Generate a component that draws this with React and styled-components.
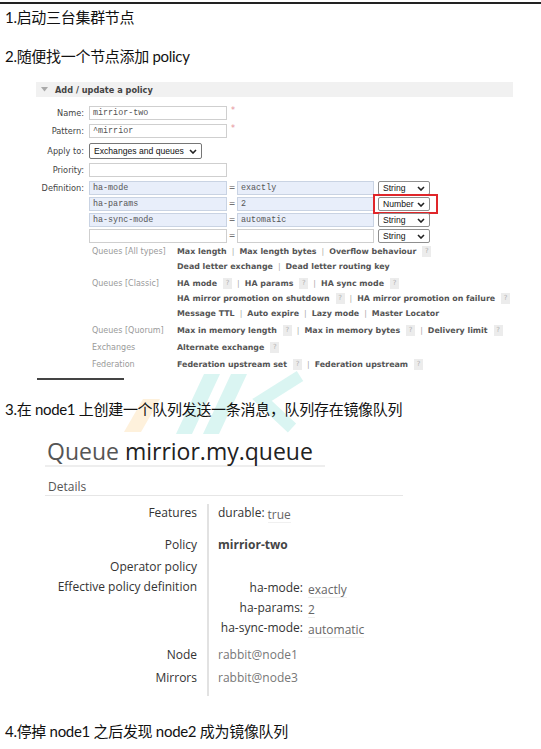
import React from 'react';
import styled, { createGlobalStyle } from 'styled-components';

const Global = createGlobalStyle`
  html, body { margin: 0; padding: 0; background: #fff; }
  body { font-family: "Noto Sans CJK SC", "Noto Sans", sans-serif; }
`;

const Page = styled.div`
  position: relative;
  isolation: isolate;
  width: 541px;
  height: 749px;
  overflow: hidden;
  padding-top: 2px;
  box-sizing: border-box;
`;

const TopRule = styled.div`
  height: 2px;
  background: #222;
`;

const Para = styled.div`
  margin-top: ${p => p.$mt}px;
  padding-left: 5px;
  font-family: Lato, "Noto Sans CJK SC", sans-serif;
  font-size: 15px;
  line-height: 20px;
  letter-spacing: -0.3px;
  color: #111;
  white-space: nowrap;
`;

/* ---------- policy form ---------- */
const PolicyPanel = styled.div`
  margin: 16px 0 0 36px;
  width: 477px;
  font-family: "DejaVu Sans", Verdana, sans-serif;
`;

const PanelHeader = styled.div`
  height: 15px;
  background: #f1f1f1;
  display: flex;
  align-items: center;
  gap: 7px;
  padding-left: 5px;
  font-size: 8.2px;
  font-weight: bold;
  color: #444;
`;

const FormRow = styled.div`
  display: flex;
  align-items: ${p => (p.$top ? 'flex-start' : 'center')};
  margin-top: ${p => p.$mt}px;
`;

const Label = styled.div`
  width: 53px;
  padding-right: 5px;
  box-sizing: border-box;
  text-align: right;
  font-size: 8.2px;
  line-height: 14px;
  color: #444;
  white-space: nowrap;
`;

const TextInput = styled.div`
  width: ${p => p.$w || 138}px;
  height: 14px;
  box-sizing: border-box;
  border: 1px solid ${p => (p.$tint ? '#c9d3e3' : '#cfcfcf')};
  background: ${p => (p.$tint ? '#e8eefa' : '#fff')};
  padding-left: 3px;
  font-family: "Liberation Mono", monospace;
  font-size: 8.4px;
  line-height: 12px;
  color: #555;
  white-space: nowrap;
  overflow: hidden;
`;

const Required = styled.span`
  align-self: flex-start;
  margin-left: 4px;
  font-size: 8px;
  line-height: 9px;
  color: #e58f98;
`;

const SelectBox = styled.div`
  width: ${p => p.$w}px;
  height: ${p => p.$h}px;
  box-sizing: border-box;
  border: 1px solid ${p => p.$border || '#767676'};
  border-radius: 2px;
  background: #fff;
  display: flex;
  align-items: center;
  justify-content: space-between;
  padding: 0 4px 0 4px;
  font-family: "Liberation Sans", Arial, sans-serif;
  font-size: 8.6px;
  color: #111;
  white-space: nowrap;
`;

const DefGrid = styled.div`
  display: grid;
  grid-template-columns: 138px 10px 137px 56px;
  row-gap: 2px;
  align-items: center;
`;

const Eq = styled.div`
  text-align: center;
  font-size: 8px;
  color: #555;
  line-height: 14px;
`;

const SelectWrap = styled.div`
  position: relative;
  justify-self: end;
`;

const Annotation = styled.div`
  position: absolute;
  left: -5px;
  right: -8px;
  top: -3px;
  bottom: -3px;
  border: 2px solid #e0262a;
  pointer-events: none;
`;

const HelpTable = styled.div`
  margin: 1px 0 0 53px;
`;

const HelpGroup = styled.div`
  display: grid;
  grid-template-columns: 88px 1fr;
  margin-bottom: 2px;
  line-height: 15px;
`;

const HelpLabel = styled.div`
  padding-left: 3px;
  font-size: 8px;
  color: #9a9a9a;
  white-space: nowrap;
`;

const HelpLine = styled.div`
  font-size: 7.9px;
  font-weight: bold;
  color: #555;
  white-space: nowrap;
  display: flex;
  align-items: center;
`;

const Sep = styled.span`
  font-weight: normal;
  color: #aaa;
  margin: 0 5px;
`;

const HelpBadge = styled.span`
  display: inline-block;
  width: 9px;
  height: 11px;
  margin-left: 6px;
  background: #ececec;
  color: #b0b0b0;
  font-size: 7px;
  font-weight: normal;
  line-height: 11px;
  text-align: center;
`;

const ShortRule = styled.div`
  margin: 6px 0 0 37px;
  width: 87px;
  height: 2px;
  background: #444;
`;

/* ---------- queue page ---------- */
const QueueSection = styled.div`
  margin-left: 45px;
  font-family: "Open Sans", "Noto Sans", sans-serif;
`;

const QueueTitle = styled.div`
  margin-top: 18px;
  width: 280px;
  padding-left: 2px;
  box-sizing: border-box;
  border-bottom: 2px solid #eeeeee;
  font-size: 23px;
  line-height: 28px;
  color: #555;
  white-space: nowrap;
`;

const QueueName = styled.span`
  color: #222;
`;

const SectionTitle = styled.div`
  margin-top: 12px;
  width: 358px;
  padding-left: 3px;
  box-sizing: border-box;
  border-bottom: 1px solid #e6e6e6;
  font-size: 12px;
  line-height: 16px;
  color: #555;
`;

const DetailsTable = styled.div`
  margin-top: 8px;
  display: grid;
  grid-template-columns: 162px 1fr;
  font-size: 12px;
`;

const DLabel = styled.div`
  padding: ${p => p.$pt || 0}px 10px ${p => p.$pb || 0}px 0;
  text-align: right;
  line-height: 18px;
  color: #333;
  white-space: nowrap;
`;

const DValue = styled.div`
  padding: ${p => p.$pt || 0}px 0 ${p => p.$pb || 0}px 9px;
  border-left: 2px solid #e2e2e2;
  line-height: 18px;
  color: ${p => (p.$muted ? '#777' : p.$bold ? '#444' : '#333')};
  font-weight: ${p => (p.$bold ? 700 : 400)};
  white-space: nowrap;
`;

const Val = styled.span`
  color: #666;
  display: inline-block;
  vertical-align: -2px;
  border-bottom: 1px solid #f0f0f0;
  line-height: 15px;
  margin-left: 3px;
`;

const NestedTable = styled.div`
  display: grid;
  grid-template-columns: 85px 1fr;
  grid-auto-rows: 20px;
  line-height: 20px;
`;

const NKey = styled.div`
  text-align: right;
  color: #333;
`;

const NVal = styled.div`
  padding-left: 2px;
`;

const Watermark = styled.svg`
  position: absolute;
  left: 110px;
  top: 360px;
  width: 200px;
  height: 80px;
  z-index: -1;
`;

const Chevron = () => (
  <svg width="8" height="5" viewBox="0 0 8 5">
    <path d="M1 1 L4 4 L7 1" fill="none" stroke="#222" strokeWidth="1.6" />
  </svg>
);

const Select = ({ w, h, border, children }) => (
  <SelectBox $w={w} $h={h} $border={border}>
    <span>{children}</span>
    <Chevron />
  </SelectBox>
);

const Help = () => <HelpBadge>?</HelpBadge>;

const defs = [
  { k: 'ha-mode', v: 'exactly', t: 'String', tint: true },
  { k: 'ha-params', v: '2', t: 'Number', tint: true, mark: true },
  { k: 'ha-sync-mode', v: 'automatic', t: 'String', tint: true },
  { k: '', v: '', t: 'String', tint: false },
];

const helpGroups = [
  {
    label: 'Queues [All types]',
    lines: [
      [['Max length'], ['Max length bytes'], ['Overflow behaviour', true]],
      [['Dead letter exchange'], ['Dead letter routing key']],
    ],
  },
  {
    label: 'Queues [Classic]',
    lines: [
      [['HA mode', true], ['HA params', true], ['HA sync mode', true]],
      [['HA mirror promotion on shutdown', true], ['HA mirror promotion on failure', true]],
      [['Message TTL'], ['Auto expire'], ['Lazy mode'], ['Master Locator']],
    ],
  },
  {
    label: 'Queues [Quorum]',
    lines: [[['Max in memory length', true], ['Max in memory bytes', true], ['Delivery limit', true]]],
  },
  { label: 'Exchanges', lines: [[['Alternate exchange', true]]] },
  {
    label: 'Federation',
    lines: [[['Federation upstream set', true], ['Federation upstream', true]]],
  },
];

export default function App() {
  return (
    <Page>
      <Global />
      <Watermark viewBox="110 360 200 80">
        <polygon points="124,432 143,399 160,399 141,432" fill="#fdecd0" opacity="0.75" />
        <polygon points="176,434 204,374 220,374 192,434" fill="#cdf1ee" opacity="0.75" />
        <polygon points="203,434 231,374 247,374 219,434" fill="#cdf1ee" opacity="0.75" />
        <polyline points="300,376 262,400 292,428" fill="none" stroke="#cdf1ee" strokeWidth="12" opacity="0.75" />
      </Watermark>
      <TopRule />
      <Para $mt={3}>1.启动三台集群节点</Para>
      <Para $mt={19}>2.随便找一个节点添加 policy</Para>

      <PolicyPanel>
        <PanelHeader>
          <svg width="7" height="5" viewBox="0 0 7 5">
            <path d="M0 0 L7 0 L3.5 4.5 Z" fill="#aaa" />
          </svg>
          Add / update a policy
        </PanelHeader>

        <FormRow $mt={9}>
          <Label>Name:</Label>
          <TextInput>mirrior-two</TextInput>
          <Required>*</Required>
        </FormRow>
        <FormRow $mt={4}>
          <Label>Pattern:</Label>
          <TextInput>^mirrior</TextInput>
          <Required>*</Required>
        </FormRow>
        <FormRow $mt={5}>
          <Label>Apply to:</Label>
          <Select w={113} h={16}>Exchanges and queues</Select>
        </FormRow>
        <FormRow $mt={4}>
          <Label>Priority:</Label>
          <TextInput />
        </FormRow>
        <FormRow $mt={4} $top>
          <Label>Definition:</Label>
          <DefGrid>
            {defs.map((d, i) => (
              <React.Fragment key={i}>
                <TextInput $tint={d.tint}>{d.k}</TextInput>
                <Eq>=</Eq>
                <TextInput $w={137} $tint={d.tint}>{d.v}</TextInput>
                <SelectWrap>
                  <Select w={52} h={14} border="#8f8f8f">{d.t}</Select>
                  {d.mark && <Annotation />}
                </SelectWrap>
              </React.Fragment>
            ))}
          </DefGrid>
        </FormRow>

        <HelpTable>
          {helpGroups.map(g => (
            <HelpGroup key={g.label}>
              <HelpLabel>{g.label}</HelpLabel>
              <div>
                {g.lines.map((line, li) => (
                  <HelpLine key={li}>
                    {line.map(([text, help], ii) => (
                      <React.Fragment key={text}>
                        {ii > 0 && <Sep>|</Sep>}
                        <span>{text}</span>
                        {help && <Help />}
                      </React.Fragment>
                    ))}
                  </HelpLine>
                ))}
              </div>
            </HelpGroup>
          ))}
        </HelpTable>
      </PolicyPanel>

      <ShortRule />
      <Para $mt={19}>3.在 node1 上创建一个队列发送一条消息，队列存在镜像队列</Para>

      <QueueSection>
        <QueueTitle>
          Queue <QueueName>mirrior.my.queue</QueueName>
        </QueueTitle>
        <SectionTitle>Details</SectionTitle>
        <DetailsTable>
          <DLabel>Features</DLabel>
          <DValue>durable:<Val>true</Val></DValue>

          <DLabel $pt={13}>Policy</DLabel>
          <DValue $pt={13} $bold>mirrior-two</DValue>

          <DLabel $pt={4}>Operator policy</DLabel>
          <DValue $pt={4}>&nbsp;</DValue>

          <DLabel $pt={2}>Effective policy definition</DLabel>
          <DValue $pt={2}>
            <NestedTable>
              <NKey>ha-mode:</NKey>
              <NVal><Val>exactly</Val></NVal>
              <NKey>ha-params:</NKey>
              <NVal><Val>2</Val></NVal>
              <NKey>ha-sync-mode:</NKey>
              <NVal><Val>automatic</Val></NVal>
            </NestedTable>
          </DValue>

          <DLabel $pt={8}>Node</DLabel>
          <DValue $pt={8} $muted>rabbit@node1</DValue>

          <DLabel $pt={5} $pb={9}>Mirrors</DLabel>
          <DValue $pt={5} $pb={9} $muted>rabbit@node3</DValue>
        </DetailsTable>
      </QueueSection>

      <Para $mt={25}>4.停掉 node1 之后发现 node2 成为镜像队列</Para>
    </Page>
  );
}
